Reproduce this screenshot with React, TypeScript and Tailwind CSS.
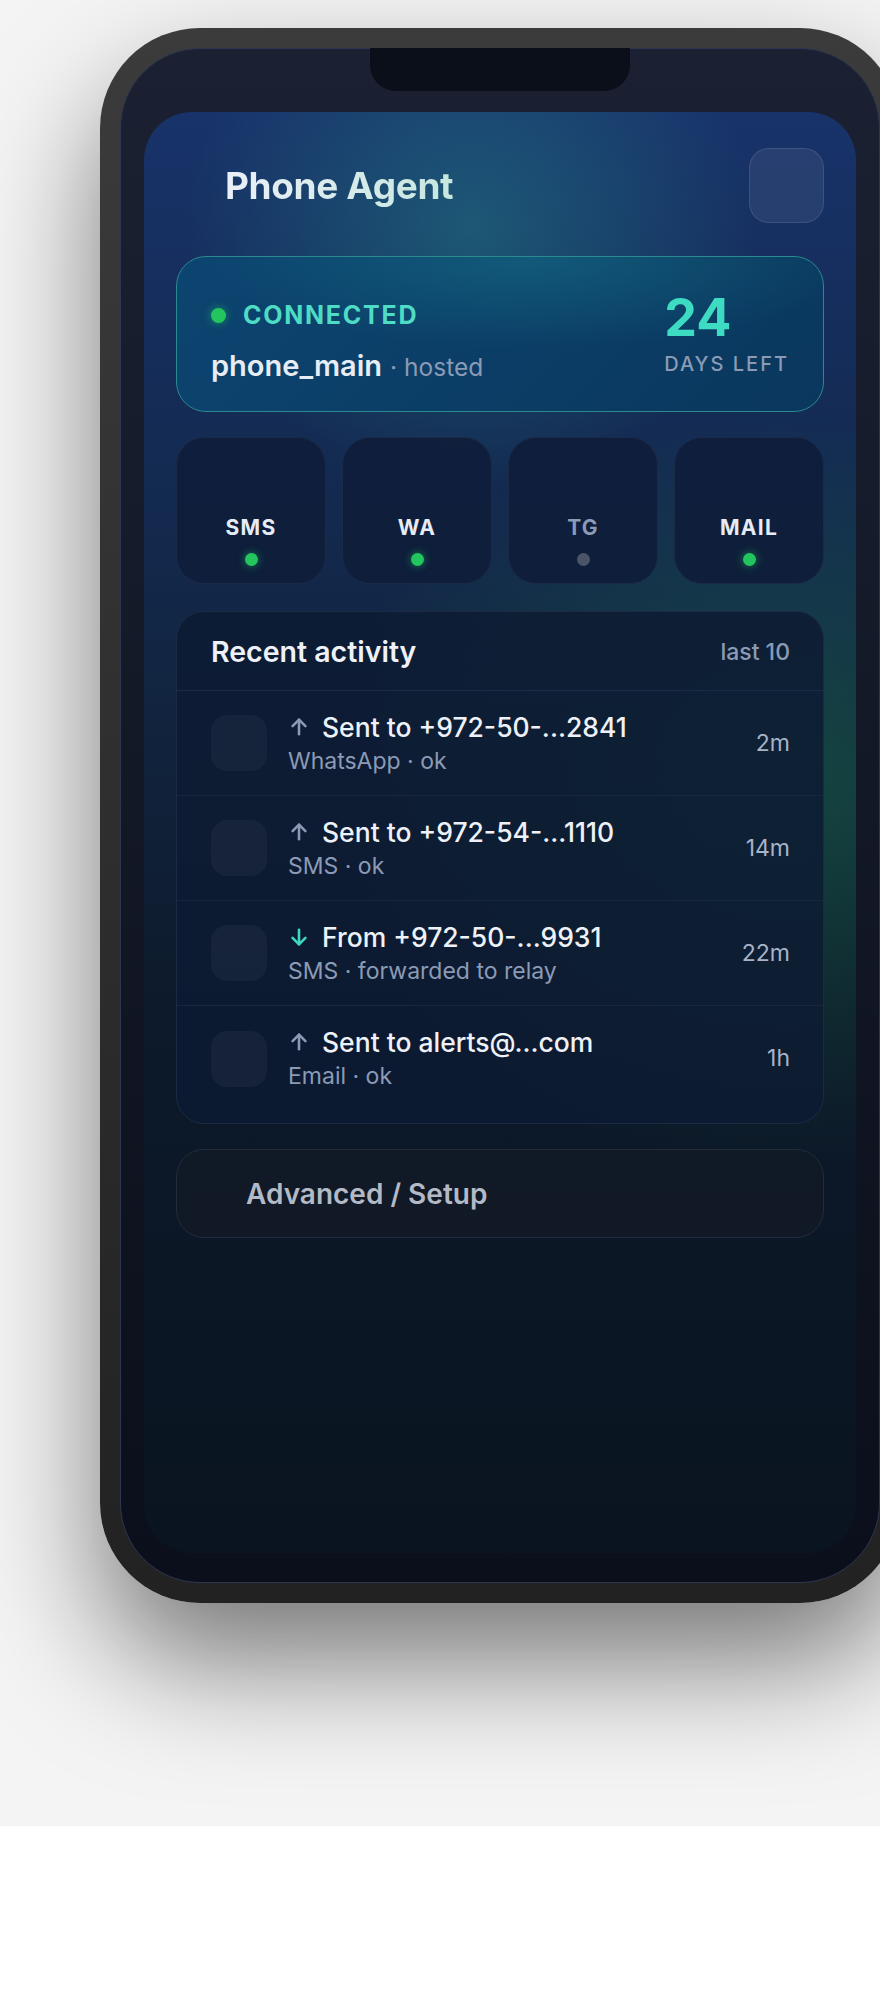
import React from "react";

type Activity = {
  dir: "up" | "down";
  title: string;
  sub: string;
  time: string;
};

const activities: Activity[] = [
  { dir: "up", title: "Sent to +972-50-...2841", sub: "WhatsApp · ok", time: "2m" },
  { dir: "up", title: "Sent to +972-54-...1110", sub: "SMS · ok", time: "14m" },
  { dir: "down", title: "From +972-50-...9931", sub: "SMS · forwarded to relay", time: "22m" },
  { dir: "up", title: "Sent to alerts@...com", sub: "Email · ok", time: "1h" },
];

const channels = [
  { label: "SMS", on: true },
  { label: "WA", on: true },
  { label: "TG", on: false },
  { label: "MAIL", on: true },
];

function Arrow({ dir }: { dir: "up" | "down" }) {
  const color = dir === "up" ? "#8b9ab5" : "#3dd9c0";
  return (
    <svg width="22" height="22" viewBox="0 0 24 24" fill="none" stroke={color} strokeWidth="2.8" strokeLinecap="round" strokeLinejoin="round">
      {dir === "up" ? (
        <>
          <path d="M12 20V4" />
          <path d="M5 11l7-7 7 7" />
        </>
      ) : (
        <>
          <path d="M12 4v16" />
          <path d="M5 13l7 7 7-7" />
        </>
      )}
    </svg>
  );
}

export default function App() {
  return (
    <div
      className="h-[1826px] w-full overflow-hidden bg-[#f4f4f4] pl-[100px] pt-[28px]"
      style={{ fontFamily: "Inter, 'Noto Sans', 'Liberation Sans', sans-serif" }}
    >
      <div className="h-[1575px] w-[800px] shrink-0 rounded-[100px] bg-gradient-to-b from-[#3b3b3b] to-[#222222] p-[20px] shadow-[0_60px_120px_rgba(0,0,0,0.5)]">
        <div className="relative h-full rounded-[80px] border border-[#2d3650] bg-gradient-to-b from-[#1b2132] to-[#0b0f1b] px-[23px] pb-[29px] pt-[63px]">
          <div className="absolute left-[249px] top-[-1px] h-[43px] w-[260px] rounded-b-[26px] bg-[#0a0f1a]" />
          <div className="flex h-full flex-col rounded-[48px] bg-[image:radial-gradient(ellipse_40%_18%_at_46%_8%,rgba(40,165,155,0.34),transparent),radial-gradient(ellipse_65%_26%_at_90%_47%,rgba(30,150,80,0.3),transparent),linear-gradient(180deg,#18336a_0%,#152d5a_16%,#13294c_30%,#11233c_44%,#0d1a2b_62%,#0a1420_100%)] px-[32px] pt-[36px]">
            {/* header */}
            <div className="flex h-[75px] items-center">
              <div className="w-[37px] shrink-0" />
              <div className="ml-[12px] bg-gradient-to-r from-[#eaeff8] to-[#c6e7de] bg-clip-text text-[37px] font-bold leading-[46px] tracking-[-0.01em] text-transparent">
                Phone Agent
              </div>
              <div className="ml-auto h-[75px] w-[75px] rounded-[20px] border border-white/10 bg-white/[0.07]" />
            </div>

            {/* connected card */}
            <div className="mt-[33px] flex h-[156px] items-center justify-between rounded-[30px] border border-[#2a8a8e] bg-[image:radial-gradient(ellipse_50%_60%_at_55%_0%,rgba(45,200,190,0.2),transparent),linear-gradient(135deg,#0c4571,#0a375d)] pl-[34px] pr-[34px]">
              <div className="mt-[18px] flex flex-col">
                <div className="flex h-[28px] items-center">
                  <div className="h-[15px] w-[15px] rounded-full bg-[#22c55e] shadow-[0_0_8px_rgba(34,197,94,0.6)]" />
                  <div className="ml-[17px] text-[25px] font-bold leading-[28px] tracking-[0.07em] text-[#4fdcc4]">CONNECTED</div>
                </div>
                <div className="mt-[19px] flex items-baseline leading-[36px]">
                  <span className="text-[29px] font-semibold text-[#e8edf5]">phone_main</span>
                  <span className="ml-[8px] text-[24.5px] text-[#8b9ab5]">· hosted</span>
                </div>
              </div>
              <div className="flex flex-col">
                <div className="text-[52px] font-bold leading-[52px] text-[#3ddbc2]">24</div>
                <div className="mt-[8px] text-[20px] font-medium leading-[24px] tracking-[0.1em] text-[#8b9ab5]">DAYS LEFT</div>
              </div>
            </div>

            {/* channels */}
            <div className="mt-[25px] grid h-[147px] grid-cols-4 gap-[16px]">
              {channels.map((c) => (
                <div
                  key={c.label}
                  className="flex flex-col items-center justify-end rounded-[28px] border border-[#1b2a47] bg-[#0e1d3a]/90 pb-[17px]"
                >
                  <div
                    className={
                      c.on
                        ? "text-[21px] font-bold leading-[26px] tracking-[0.06em] text-[#e6ecf5]"
                        : "text-[21px] font-bold leading-[26px] tracking-[0.06em] text-[#8b9ab5]"
                    }
                  >
                    {c.label}
                  </div>
                  <div
                    className={
                      c.on
                        ? "mt-[12px] h-[13px] w-[13px] rounded-full bg-[#22c55e] shadow-[0_0_8px_rgba(34,197,94,0.6)]"
                        : "mt-[12px] h-[13px] w-[13px] rounded-full bg-[#4b5568]"
                    }
                  />
                </div>
              ))}
            </div>

            {/* recent activity */}
            <div className="mt-[27px] rounded-[28px] border border-[#1c2a44] bg-[#0d1b33]/85 pb-[12px]">
              <div className="flex h-[79px] items-center justify-between border-b border-[#1c2a44] pl-[34px] pr-[33px] pt-[3px]">
                <div className="text-[28.5px] font-semibold text-[#eef2f8]">Recent activity</div>
                <div className="text-[23px] font-medium text-[#8b9ab5]">last 10</div>
              </div>
              {activities.map((a, i) => (
                <div
                  key={a.title}
                  className={
                    i < activities.length - 1
                      ? "flex h-[105px] items-center border-b border-[#18263e] pl-[34px] pr-[33px]"
                      : "flex h-[105px] items-center pl-[34px] pr-[33px]"
                  }
                >
                  <div className="h-[56px] w-[56px] shrink-0 rounded-[16px] bg-white/[0.04]" />
                  <div className="ml-[21px] flex flex-1 flex-col">
                    <div className="flex items-center leading-[32px]">
                      <Arrow dir={a.dir} />
                      <span className="ml-[12px] text-[26.5px] font-medium text-[#eef2f8]">{a.title}</span>
                    </div>
                    <div className="mt-[3px] text-[23px] leading-[30px] text-[#8b9ab5]">{a.sub}</div>
                  </div>
                  <div className="text-[23px] text-[#a7b3c7]">{a.time}</div>
                </div>
              ))}
            </div>

            {/* advanced */}
            <div className="mt-[25px] flex h-[89px] items-center rounded-[28px] border border-[#232c3a] bg-[#111a26]/90 pl-[69px]">
              <div className="text-[28px] font-semibold text-[#b3b9c5]">Advanced / Setup</div>
            </div>
          </div>
        </div>
      </div>
    </div>
  );
}
